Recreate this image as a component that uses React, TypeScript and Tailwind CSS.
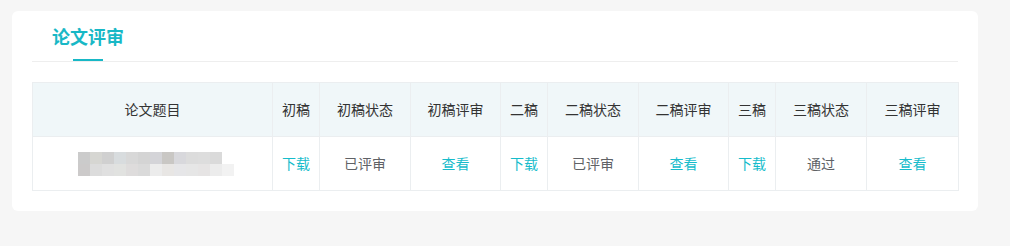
import React from 'react';

const cols = [
  { title: '论文题目', w: 'w-[240px]' },
  { title: '初稿', w: 'w-[47px]' },
  { title: '初稿状态', w: 'w-[91px]' },
  { title: '初稿评审', w: 'w-[90px]' },
  { title: '二稿', w: 'w-[47px]' },
  { title: '二稿状态', w: 'w-[91px]' },
  { title: '二稿评审', w: 'w-[90px]' },
  { title: '三稿', w: 'w-[47px]' },
  { title: '三稿状态', w: 'w-[91px]' },
  { title: '三稿评审', w: 'w-[92px]' },
];

const blurRow1 = ['#cbcbcb', '#d6d6d2', '#d0d0d0', '#d8dcde', '#d8d8d8', '#d4d4d4', '#d4d4d8', '#c9c7c4', '#d8d8dc', '#dcdcdc', '#dddddd', '#dadada'];
const blurRow2 = ['#cccaca', '#dcdcdc', '#e0e0e0', '#e1e2e0', '#dedcdc', '#dadada', '#ececec', '#e8e6e4', '#e6e6e8', '#e6e6e6', '#e6e4e4', '#ececec', '#f2f2f2'];

const Link = ({ children }: { children: React.ReactNode }) => (
  <span className="text-[#16bccb] cursor-pointer">{children}</span>
);

const Status = ({ children }: { children: React.ReactNode }) => (
  <span className="text-[#606266]">{children}</span>
);

export default function App() {
  const cells: React.ReactNode[] = [
    <div className="flex flex-col items-start pl-[45px]">
      <div className="flex">
        {blurRow1.map((c, i) => (
          <div key={i} className="w-[12px] h-[12px]" style={{ backgroundColor: c }} />
        ))}
      </div>
      <div className="flex">
        {blurRow2.map((c, i) => (
          <div key={i} className="w-[12px] h-[12px]" style={{ backgroundColor: c }} />
        ))}
      </div>
    </div>,
    <Link>下载</Link>,
    <Status>已评审</Status>,
    <Link>查看</Link>,
    <Link>下载</Link>,
    <Status>已评审</Status>,
    <Link>查看</Link>,
    <Link>下载</Link>,
    <Status>通过</Status>,
    <Link>查看</Link>,
  ];

  return (
    <div className="w-[1010px] h-[246px] bg-[#f6f6f6] pt-[11px] pl-[12px] font-['Noto_Sans_CJK_SC','Noto_Sans',sans-serif]">
      <div className="w-[966px] bg-white rounded-[6px] px-5 pb-5">
        <div className="flex border-b border-[#eeeeee] h-[51px]">
          <div className="relative h-[50px] px-5 flex items-center">
            <span className="text-[18px] font-bold text-[#18b8c6] leading-none">论文评审</span>
            <div className="absolute bottom-0 left-[41px] w-[30px] h-[2px] bg-[#18b8c6]" />
          </div>
        </div>
        <table className="mt-5 w-[926px] border-collapse table-fixed text-[14px]">
          <thead>
            <tr className="bg-[#f0f7f9]">
              {cols.map((c) => (
                <th key={c.title} className={`${c.w} h-[54px] border border-[#ebeef0] font-normal text-[#333333] text-center p-0`}>
                  {c.title}
                </th>
              ))}
            </tr>
          </thead>
          <tbody>
            <tr>
              {cells.map((c, i) => (
                <td key={i} className="h-[54px] border border-[#ebeef0] text-center p-0">
                  {c}
                </td>
              ))}
            </tr>
          </tbody>
        </table>
      </div>
    </div>
  );
}
